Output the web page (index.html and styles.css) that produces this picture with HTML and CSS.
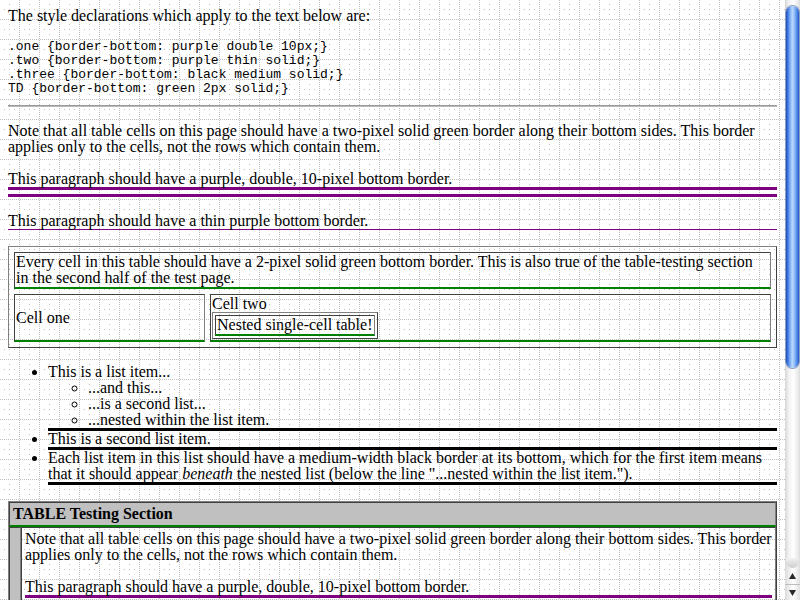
FILE: index.html
```html
<!DOCTYPE html>
<html>
<head>
<meta charset="utf-8">
<title>CSS1 Test: border-bottom</title>
<link rel="stylesheet" href="styles.css">
</head>
<body>
<div class="page">
<p class="intro">The style declarations which apply to the text below are:</p>
<pre class="decl">.one {border-bottom: purple double 10px;}
.two {border-bottom: purple thin solid;}
.three {border-bottom: black medium solid;}
TD {border-bottom: green 2px solid;}</pre>
<hr class="rule">
<p>Note that all table cells on this page should have a two-pixel solid green border along their bottom sides. This border applies only to the cells, not the rows which contain them.</p>
<p class="one">This paragraph should have a purple, double, 10-pixel bottom border.</p>
<p class="two">This paragraph should have a thin purple bottom border.</p>
<table class="grid outer">
<tr><td colspan="2">Every cell in this table should have a 2-pixel solid green bottom border. This is also true of the table-testing section in the second half of the test page.</td></tr>
<tr><td class="c1">Cell one</td><td>Cell two<table class="grid inner"><tr><td>Nested single-cell table!</td></tr></table></td></tr>
</table>
<ul class="list">
<li class="three">This is a list item...
<ul class="sub">
<li>...and this...</li>
<li>...is a second list...</li>
<li>...nested within the list item.</li>
</ul>
</li>
<li class="three">This is a second list item.</li>
<li class="three">Each list item in this list should have a medium-width black border at its bottom, which for the first item means that it should appear <em>beneath</em> the nested list (below the line "...nested within the list item.").</li>
</ul>
<table class="tabletest">
<tr><td colspan="2" class="head"><strong>TABLE Testing Section</strong></td></tr>
<tr><td class="side">&nbsp;</td><td class="body">
<p class="lead">Note that all table cells on this page should have a two-pixel solid green border along their bottom sides. This border applies only to the cells, not the rows which contain them.</p>
<p class="one">This paragraph should have a purple, double, 10-pixel bottom border.</p>
<p class="two">This paragraph should have a thin purple bottom border.</p>
<table class="grid outer">
<tr><td colspan="2">Every cell in this table should have a 2-pixel solid green bottom border. This is also true of the table-testing section in the second half of the test page.</td></tr>
<tr><td class="c1">Cell one</td><td>Cell two<table class="grid inner"><tr><td>Nested single-cell table!</td></tr></table></td></tr>
</table>
</td></tr>
</table>
</div>
<div class="sb">
<div class="sb-top"></div>
<div class="thumb"></div>
<div class="sb-track"></div>
<div class="sb-end"></div>
<div class="sb-btn"><svg width="7" height="6" viewBox="0 0 7 6"><path d="M3.5 0L7 6H0z" fill="#2a2a2a"/></svg></div>
<div class="sb-btn sb-down"><svg width="7" height="6" viewBox="0 0 7 6"><path d="M0 0h7L3.5 6z" fill="#2a2a2a"/></svg></div>
</div>
</body>
</html>
```
FILE: styles.css
```css
html, body {
  margin: 0;
  height: 100%;
}
body {
  display: flex;
  overflow: hidden;
  font-family: "Liberation Serif", "Times New Roman", serif;
  font-size: 16px;
  line-height: 16px;
  color: #000;
}
.page {
  flex: 1;
  min-width: 0;
  padding: 8px;
  overflow: hidden;
  background: #fff url("data:image/svg+xml,%3Csvg xmlns='http://www.w3.org/2000/svg' width='20' height='20' shape-rendering='crispEdges'%3E%3Cg stroke='%23c0c0c0' stroke-dasharray='1 1'%3E%3Cline x1='0' y1='19.5' x2='20' y2='19.5'/%3E%3Cline x1='19.5' y1='0' x2='19.5' y2='20'/%3E%3C/g%3E%3Cpath fill='%23c0c0c0' d='M9 4h1v1H9zM4 9h1v1H4zM9 9h1v1H9zM14 9h1v1h-1zM9 14h1v1H9z'/%3E%3C/svg%3E");
}
p {
  margin: 16px 0;
}
.intro {
  margin-top: 0;
}
.decl {
  font-family: "Liberation Mono", "Courier New", monospace;
  font-size: 13px;
  line-height: 14px;
  margin: 16px 0 0;
}
.rule {
  margin: 9px 0 16px;
  height: 0;
  border: 0;
  border-top: 1px solid #9a9a9a;
  border-bottom: 1px solid #b8b8b8;
}
.one {
  border-bottom: 10px double #800080;
}
.two {
  border-bottom: 1px solid #800080;
}
.three {
  border-bottom: 3px solid #000;
}
table {
  font-size: 16px;
  line-height: 16px;
}
.grid {
  border-collapse: separate;
  border: 1px solid;
  border-color: #808080 #404040 #404040 #808080;
}
.grid td {
  border: 1px solid;
  border-color: #404040 #808080 #008000 #404040;
  border-bottom: 2px solid #008000;
  padding: 1px;
}
.outer {
  width: 100%;
  border-spacing: 5px;
}
.inner {
  border-spacing: 2px;
}
.c1 {
  width: 187px;
}
.list {
  margin: 16px 0;
  padding-left: 40px;
}
.sub {
  margin: 0;
  padding-left: 40px;
  list-style-type: circle;
}
.tabletest {
  width: 100%;
  border-collapse: separate;
  border-spacing: 0;
  border: 1px solid;
  border-color: #808080 #404040 #404040 #808080;
}
.tabletest > tbody > tr > td {
  border: 1px solid;
  border-color: #404040 #808080 #008000 #404040;
  border-bottom: 2px solid #008000;
  padding: 3px;
}
.head, .side {
  background: #c0c0c0;
}
.lead {
  margin-top: 0;
}
/* scrollbar */
.sb {
  width: 15px;
  flex: none;
  display: flex;
  flex-direction: column;
  background: linear-gradient(to right, #d6d6d6, #f2f2f2 25%, #ffffff 55%, #ececec 85%, #dcdcdc);
}
.sb-top {
  height: 6px;
  flex: none;
}
.thumb {
  height: 362px;
  flex: none;
  margin: 0 1px;
  border-radius: 7px;
  box-shadow: 0 0 0 1px #8a9cc0;
  background: linear-gradient(to right, #1c48b4 0%, #3f77e0 14%, #7fb0f4 32%, #b9d7fc 48%, #9cc5f8 62%, #5c95ec 80%, #2458cc 100%);
}
.sb-track {
  flex: 1;
}
.sb-end {
  height: 10px;
  flex: none;
  margin: 0 1px;
  border-radius: 0 0 7px 7px;
  background: linear-gradient(#f2f2f2, #cdcdcd);
}
.sb-btn {
  height: 16px;
  flex: none;
  display: flex;
  align-items: center;
  justify-content: center;
  box-sizing: border-box;
  background: linear-gradient(to right, #dadada, #f6f6f6 40%, #ffffff 55%, #e0e0e0);
}
.sb-down {
  border-top: 1px solid #bdbdbd;
}
```
